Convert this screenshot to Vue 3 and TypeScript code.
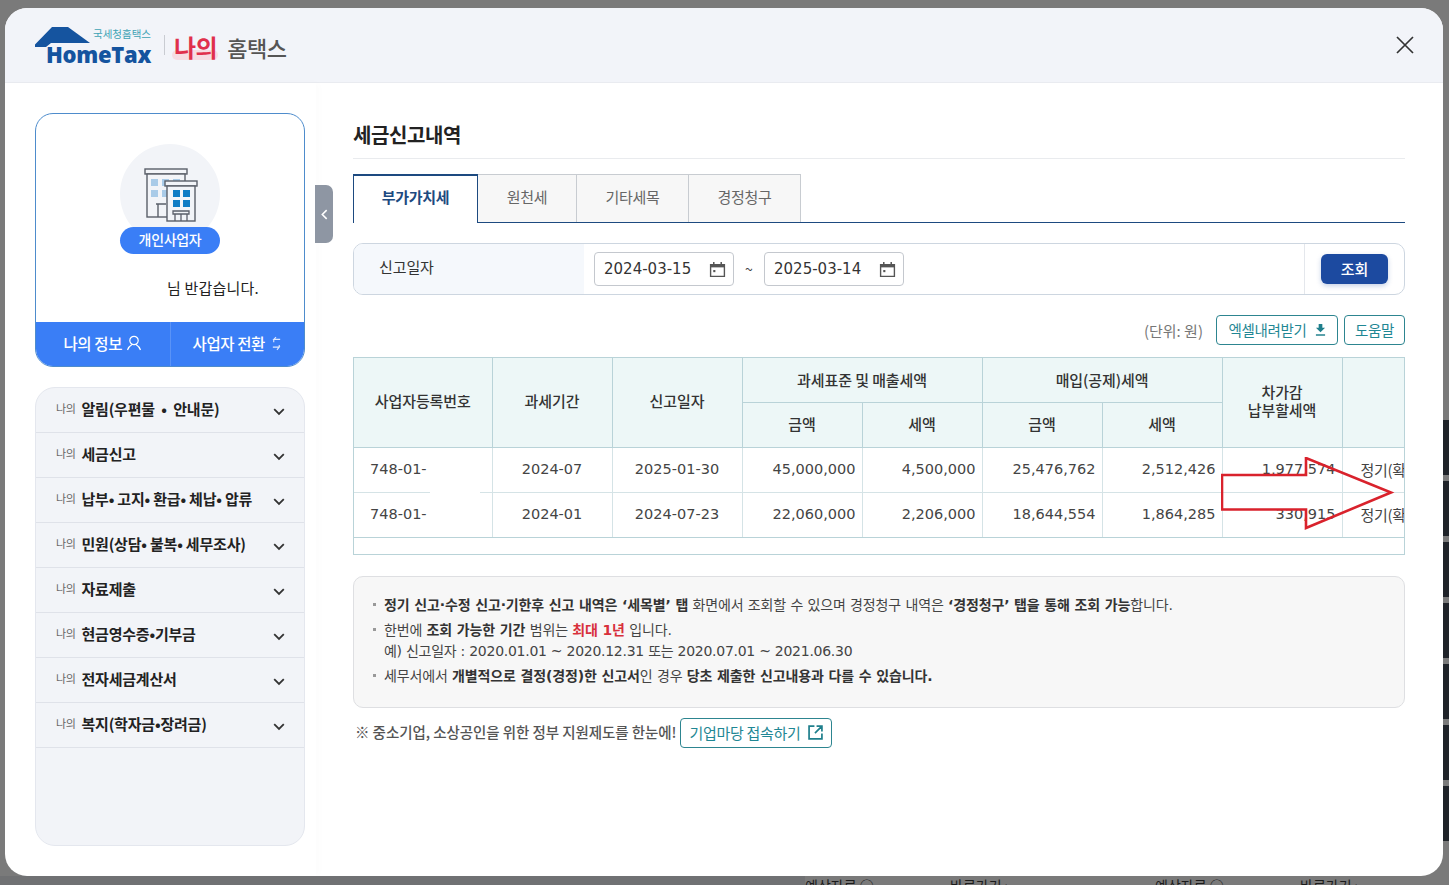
<script setup lang="ts">
const menus = [
  "알림(우편물\u00a0\u00a0•\u00a0\u00a0안내문)",
  "세금신고",
  "납부• 고지• 환급• 체납• 압류",
  "민원(상담• 불복• 세무조사)",
  "자료제출",
  "현금영수증•기부금",
  "전자세금계산서",
  "복지(학자금•장려금)"
];

const tabs = ["부가가치세", "원천세", "기타세목", "경정청구"];

const rows = [
  ["748-01-", "2024-07", "2025-01-30", "45,000,000", "4,500,000", "25,476,762", "2,512,426", "1,977,574", "정기(확정)"],
  ["748-01-", "2024-01", "2024-07-23", "22,060,000", "2,206,000", "18,644,554", "1,864,285", "330,915", "정기(확정)"]
];

const bgStrips = [0, 1, 2, 3, 4, 5, 6];
</script>

<template>
  <div class="page">
    <div class="bg-right">
      <div v-for="s in bgStrips" :key="s" class="bg-strip"></div>
    </div>
    <div class="bg-left-shade"></div>
    <div class="bg-links">
      <span>예상자료 ○</span><span>바로가기 ›</span><span>예상자료 ○</span><span>바로가기 ›</span>
    </div>

    <div class="modal">
      <header class="modal-head">
        <div class="logo">
          <svg class="logo-house" viewBox="0 0 120 44" width="120" height="44" aria-hidden="true">
            <path d="M0 21.5 L17 4 H33 L55 20 H16 L11 24 H0 Z" fill="#15549f" />
          </svg>
          <span class="logo-sub">국세청홈택스</span>
          <span class="logo-main">HomeTax</span>
        </div>
        <span class="logo-sep"></span>
        <span class="my"><span class="my-mark"></span><b>나의</b></span>
        <span class="my-home">홈택스</span>
        <svg class="close" viewBox="0 0 18 18" width="18" height="18" aria-label="닫기">
          <path d="M1 1 L17 17 M17 1 L1 17" stroke="#333" stroke-width="1.7" fill="none" />
        </svg>
      </header>

      <div class="modal-body">
        <aside class="side">
          <div class="profile">
            <div class="avatar">
              <svg viewBox="0 0 56 56" width="56" height="56" aria-hidden="true">
                <rect x="3" y="2" width="42" height="5" fill="#f2f4f8" stroke="#5a5f69" stroke-width="1.4" />
                <rect x="5" y="7" width="38" height="43" fill="#f2f4f8" stroke="#5a5f69" stroke-width="1.4" />
                <g fill="#a9cbe8">
                  <rect x="9" y="12" width="7" height="7" /><rect x="20" y="12" width="7" height="7" /><rect x="31" y="12" width="7" height="7" />
                  <rect x="9" y="23" width="7" height="7" /><rect x="20" y="23" width="7" height="7" />
                </g>
                <path d="M14 37 H24 M16 37 V50 M26 37 V50" stroke="#5a5f69" stroke-width="1.4" fill="none" />
                <rect x="23" y="14" width="32" height="5" fill="#f2f4f8" stroke="#5a5f69" stroke-width="1.4" />
                <rect x="25" y="19" width="28" height="35" fill="#f2f4f8" stroke="#5a5f69" stroke-width="1.4" />
                <g fill="#0f7cc4">
                  <rect x="31" y="23" width="7" height="7" /><rect x="41" y="23" width="7" height="7" />
                  <rect x="31" y="33" width="7" height="7" /><rect x="41" y="33" width="7" height="7" />
                </g>
                <path d="M31 44 H47 V47 H31 Z M33 47 V54 M39 47 V54 M45 47 V54" stroke="#5a5f69" stroke-width="1.3" fill="none" />
              </svg>
              <span class="badge">개인사업자</span>
            </div>
            <p class="hello">님 반갑습니다.</p>
            <div class="profile-actions">
              <span class="pa">
                나의 정보
                <svg viewBox="0 0 16 16" width="16" height="16" aria-hidden="true">
                  <circle cx="8" cy="5.5" r="4.2" fill="none" stroke="#fff" stroke-width="1.2" />
                  <path d="M1.5 15 C2.5 11.5 5 10 6 9.4 M14.5 15 C13.5 11.5 11 10 10 9.4" fill="none" stroke="#fff" stroke-width="1.2" />
                </svg>
              </span>
              <span class="pa pa-r">
                사업자 전환
                <svg viewBox="0 0 12 16" width="11" height="15" aria-hidden="true">
                  <path d="M10 3.5 H3 L5.5 1 M3 6.5 L3 3.5 M2 12 H9 L6.5 15 M9 9.5 V12" fill="none" stroke="#dfe9ff" stroke-width="1.2" />
                </svg>
              </span>
            </div>
          </div>

          <nav class="menu">
            <div v-for="m in menus" :key="m" class="menu-item">
              <span class="menu-pre">나의</span>
              <span class="menu-name">{{ m }}</span>
              <svg class="chev" viewBox="0 0 12 8" width="12" height="8" aria-hidden="true">
                <path d="M1.2 1.2 L6 6 L10.8 1.2" fill="none" stroke="#333" stroke-width="1.8" />
              </svg>
            </div>
          </nav>
        </aside>

        <div class="handle">
          <svg viewBox="0 0 8 12" width="7" height="11" aria-hidden="true">
            <path d="M6.5 1 L1.5 6 L6.5 11" fill="none" stroke="#fff" stroke-width="1.8" />
          </svg>
        </div>

        <main class="main">
          <h2 class="title">세금신고내역</h2>

          <div class="tabs">
            <span v-for="(t, i) in tabs" :key="t" class="tab" :class="{ on: i === 0 }">{{ t }}</span>
          </div>

          <div class="search">
            <div class="search-label">신고일자</div>
            <div class="search-fields">
              <div class="date">
                2024-03-15
                <svg viewBox="0 0 16 16" width="17" height="17" aria-hidden="true">
                  <path d="M1.5 3.5 H14.5 V14.5 H1.5 Z" fill="none" stroke="#555" stroke-width="1.3" />
                  <path d="M1.5 3 H14.5 V6 H1.5 Z" fill="#555" />
                  <path d="M4.5 1 V3 M11.5 1 V3" stroke="#555" stroke-width="1.4" />
                  <rect x="4" y="8.5" width="2" height="2" fill="#555" />
                </svg>
              </div>
              <span class="tilde">~</span>
              <div class="date">
                2025-03-14
                <svg viewBox="0 0 16 16" width="17" height="17" aria-hidden="true">
                  <path d="M1.5 3.5 H14.5 V14.5 H1.5 Z" fill="none" stroke="#555" stroke-width="1.3" />
                  <path d="M1.5 3 H14.5 V6 H1.5 Z" fill="#555" />
                  <path d="M4.5 1 V3 M11.5 1 V3" stroke="#555" stroke-width="1.4" />
                  <rect x="4" y="8.5" width="2" height="2" fill="#555" />
                </svg>
              </div>
            </div>
            <div class="search-btn-cell"><button class="btn-search">조회</button></div>
          </div>

          <div class="tools">
            <span class="unit">(단위: 원)</span>
            <span class="btn-line excel">
              엑셀내려받기
              <svg viewBox="0 0 12 14" width="11" height="13" aria-hidden="true">
                <path d="M4 1 H8 V5 H11 L6 10 L1 5 H4 Z" fill="#1f7f8c" />
                <path d="M1 13 H11" stroke="#1f7f8c" stroke-width="1.6" />
              </svg>
            </span>
            <span class="btn-line help">도움말</span>
          </div>

          <div class="table-wrap">
            <table class="grid">
              <colgroup>
                <col style="width: 138px" /><col style="width: 120px" /><col style="width: 130px" />
                <col style="width: 120px" /><col style="width: 120px" /><col style="width: 120px" />
                <col style="width: 120px" /><col style="width: 120px" /><col style="width: 120px" />
              </colgroup>
              <thead>
                <tr>
                  <th rowspan="2" class="pull">사업자등록번호</th>
                  <th rowspan="2" class="pull">과세기간</th>
                  <th rowspan="2" class="pull">신고일자</th>
                  <th colspan="2" class="top">과세표준 및 매출세액</th>
                  <th colspan="2" class="top">매입(공제)세액</th>
                  <th rowspan="2" class="pull">차가감<br />납부할세액</th>
                  <th rowspan="2"></th>
                </tr>
                <tr>
                  <th class="pull">금액</th><th class="pull">세액</th><th class="pull">금액</th><th class="pull">세액</th>
                </tr>
              </thead>
              <tbody>
                <tr v-for="(r, ri) in rows" :key="ri">
                  <td class="num-l">{{ r[0] }}</td>
                  <td class="mid">{{ r[1] }}</td>
                  <td class="mid">{{ r[2] }}</td>
                  <td class="num">{{ r[3] }}</td>
                  <td class="num">{{ r[4] }}</td>
                  <td class="num">{{ r[5] }}</td>
                  <td class="num">{{ r[6] }}</td>
                  <td class="num">{{ r[7] }}</td>
                  <td class="kind">{{ r[8] }}</td>
                </tr>
              </tbody>
            </table>
            <div class="table-foot"></div>
            <div class="mask"></div>
            <svg class="arrow" viewBox="0 0 180 76" width="180" height="76" aria-hidden="true">
              <path d="M1 18 H85 V1 L170 35.5 L85 71 V52.5 H1 Z" fill="none" stroke="#d9222c" stroke-width="2.6" />
            </svg>
          </div>

          <div class="notice">
            <p class="li"><b>정기 신고·수정 신고·기한후 신고 내역은 ‘세목별’ 탭</b> 화면에서 조회할 수 있으며 경정청구 내역은 <b>‘경정청구’ 탭을 통해 조회 가능</b>합니다.</p>
            <p class="li">한번에 <b>조회 가능한 기간</b> 범위는 <b class="red">최대 1년</b> 입니다.</p>
            <p class="sub">예) 신고일자 : 2020.01.01 ~ 2020.12.31 또는 2020.07.01 ~ 2021.06.30</p>
            <p class="li">세무서에서 <b>개별적으로 결정(경정)한 신고서</b>인 경우 <b>당초 제출한 신고내용과 다를 수 있습니다.</b></p>
          </div>

          <div class="support">
            <span class="support-text">※ 중소기업, 소상공인을 위한 정부 지원제도를 한눈에!</span>
            <span class="btn-line go">
              기업마당 접속하기
              <svg viewBox="0 0 14 14" width="15" height="15" aria-hidden="true">
                <path d="M6 1 H1 V13 H13 V8 M8 1 H13 V6 M13 1 L6.5 7.5" fill="none" stroke="#1f7f8c" stroke-width="1.6" />
              </svg>
            </span>
          </div>
        </main>
      </div>
    </div>
  </div>
</template>

<style scoped>
.page {
  position: relative;
  width: 1449px;
  height: 885px;
  overflow: hidden;
  background: #7a7a7a;
  padding: 8px 6px 9px 5px;
  box-sizing: border-box;
  font-family: "Noto Sans CJK KR", "Noto Sans", sans-serif;
  color: #333;
}

.bg-left-shade {
  position: absolute;
  left: 0;
  top: 876px;
  width: 805px;
  height: 9px;
  background: #707173;
}

.bg-links {
  position: absolute;
  left: 805px;
  top: 876px;
  display: flex;
  font-size: 14px;
  line-height: 18px;
  color: #1c1c1c;
  white-space: nowrap;
}

.bg-links span {
  width: 145px;
}

.bg-links span:nth-child(2) {
  width: 205px;
}

.bg-right {
  position: absolute;
  right: 0;
  top: 420px;
  width: 6px;
  display: flex;
  flex-direction: column;
  gap: 6px;
}

.bg-strip {
  height: 55px;
  background: #1f2329;
}

.modal {
  position: relative;
  height: 868px;
  background: #fff;
  border-radius: 22px;
  overflow: hidden;
}

.modal-head {
  position: relative;
  display: flex;
  align-items: center;
  height: 75px;
  padding-left: 30px;
  background: #f2f4f9;
  border-bottom: 1px solid #e9ebf0;
  box-sizing: border-box;
}

.logo {
  position: relative;
  width: 118px;
  height: 44px;
  flex: none;
}

.logo-house {
  position: absolute;
  left: 0;
  top: 0;
}

.logo-sub {
  position: absolute;
  left: 58px;
  top: 4px;
  font-size: 10.5px;
  line-height: 14px;
  color: #3fa3b5;
  white-space: nowrap;
}

.logo-main {
  position: absolute;
  left: 11px;
  top: 16px;
  font-family: "Open Sans", sans-serif;
  font-weight: 800;
  font-size: 22px;
  line-height: 30px;
  letter-spacing: -0.3px;
  color: #15549f;
  white-space: nowrap;
}

.logo-sep {
  width: 1px;
  height: 20px;
  margin: 0 9px 0 11px;
  background: #c9ccd2;
}

.my {
  position: relative;
  margin-top: 4px;
  font-size: 24px;
  line-height: 30px;
  color: #e0304c;
  letter-spacing: -0.5px;
}

.my b {
  position: relative;
  font-weight: 700;
}

.my-mark {
  position: absolute;
  left: -2px;
  right: -1px;
  bottom: 2px;
  height: 10px;
  border-radius: 5px;
  background: #f6dde3;
}

.my-home {
  margin: 4px 0 0 10px;
  font-size: 22px;
  font-weight: 500;
  color: #555;
  letter-spacing: -0.4px;
}

.close {
  position: absolute;
  right: 29px;
  top: 28px;
}

.modal-body {
  position: relative;
  display: flex;
  height: 793px;
}

.side {
  flex: none;
  width: 311px;
  padding: 30px 11px 0 30px;
  box-sizing: border-box;
  box-shadow: 3px 0 8px rgba(0, 0, 0, 0.015);
}

.profile {
  height: 254px;
  border: 1px solid #4e8ccc;
  border-radius: 18px;
  overflow: hidden;
  box-sizing: border-box;
  display: flex;
  flex-direction: column;
  align-items: center;
}

.avatar {
  position: relative;
  margin-top: 30px;
  width: 100px;
  height: 100px;
  border-radius: 50%;
  background: #f2f4f8;
  display: flex;
  justify-content: center;
  padding-top: 23px;
  box-sizing: border-box;
}

.badge {
  position: absolute;
  left: 0;
  right: 0;
  top: 83px;
  height: 27px;
  border-radius: 14px;
  background: #3a7ef6;
  color: #fff;
  font-size: 14px;
  font-weight: 500;
  line-height: 24px;
  text-align: center;
  letter-spacing: -0.3px;
}

.hello {
  margin: 33px 0 0;
  padding-left: 131px;
  width: 100%;
  box-sizing: border-box;
  font-size: 15px;
  line-height: 22px;
  color: #222;
  letter-spacing: 0.2px;
}

.profile-actions {
  margin-top: auto;
  width: 100%;
  height: 44px;
  display: flex;
  background: #3a7ef6;
}

.pa {
  flex: 1;
  display: flex;
  align-items: center;
  justify-content: center;
  gap: 4px;
  padding-bottom: 2px;
  color: #fff;
  font-size: 15.5px;
  font-weight: 500;
  letter-spacing: -0.4px;
}

.pa-r {
  border-left: 1px solid #5a93f7;
  gap: 6px;
}

.menu {
  margin-top: 20px;
  height: 459px;
  background: #f2f4f8;
  border: 1px solid #e4e7ee;
  border-radius: 20px;
  box-sizing: border-box;
  overflow: hidden;
}

.menu-item {
  position: relative;
  display: flex;
  align-items: center;
  height: 45px;
  padding-left: 20px;
  border-bottom: 1px solid #dfe2e9;
  box-sizing: border-box;
  padding-bottom: 4px;
}

.menu-pre {
  font-size: 11px;
  color: #666;
  margin-right: 6px;
  letter-spacing: -0.4px;
}

.menu-name {
  font-size: 15px;
  font-weight: 700;
  color: #222;
  letter-spacing: -0.2px;
  white-space: nowrap;
}

.chev {
  position: absolute;
  right: 19px;
  top: 20px;
}

.handle {
  position: absolute;
  left: 310px;
  top: 102px;
  width: 18px;
  height: 58px;
  border-radius: 0 7px 7px 0;
  background: #8e96a3;
  display: flex;
  align-items: center;
  justify-content: center;
}

.main {
  flex: none;
  width: 1052px;
  margin-left: 37px;
}

.title {
  margin: 0;
  height: 76px;
  padding-top: 36px;
  box-sizing: border-box;
  border-bottom: 1px solid #e9ebee;
  font-size: 20px;
  font-weight: 700;
  line-height: 32px;
  color: #222;
  letter-spacing: -0.4px;
}

.tabs {
  margin-top: 15px;
  display: flex;
  height: 49px;
  border-bottom: 1px solid #1d4a80;
  box-sizing: border-box;
}

.tab {
  width: 112px;
  border: 1px solid #c8ccd1;
  border-left: 0;
  border-bottom: 0;
  background: #f7f7f7;
  color: #666;
  font-size: 15px;
  line-height: 44px;
  text-align: center;
  box-sizing: border-box;
  letter-spacing: -0.3px;
}

.tab:nth-child(2) {
  width: 99px;
}

.tab.on {
  width: 125px;
  height: 49px;
  background: #fff;
  border: 1px solid #1d4a80;
  border-top-width: 2px;
  border-bottom: 0;
  color: #1d4a80;
  font-weight: 700;
  line-height: 42px;
}

.search {
  margin-top: 20px;
  height: 52px;
  display: flex;
  border: 1px solid #cdd6e0;
  border-radius: 10px;
  overflow: hidden;
  box-sizing: border-box;
}

.search-label {
  width: 230px;
  padding-left: 25px;
  background: #f5f8fc;
  font-size: 15px;
  line-height: 46px;
  box-sizing: border-box;
  color: #333;
  letter-spacing: -0.1px;
}

.search-fields {
  flex: 1;
  display: flex;
  align-items: center;
  padding-left: 10px;
}

.date {
  width: 140px;
  height: 34px;
  border: 1px solid #c4c8ce;
  border-radius: 4px;
  box-sizing: border-box;
  padding: 0 7px 0 9px;
  display: flex;
  align-items: center;
  justify-content: space-between;
  font-family: "DejaVu Sans", sans-serif;
  font-size: 15px;
  color: #333;
}

.tilde {
  width: 30px;
  text-align: center;
  font-size: 14px;
  color: #444;
}

.search-btn-cell {
  width: 100px;
  border-left: 1px solid #e4e7ec;
  display: flex;
  align-items: center;
  justify-content: center;
  box-sizing: border-box;
}

.btn-search {
  width: 67px;
  height: 30px;
  padding: 0 0 2px;
  border: 0;
  border-radius: 6px;
  background: #1c4aa0;
  box-shadow: 0 2px 5px rgba(28, 74, 160, 0.25);
  color: #fff;
  font-family: inherit;
  font-size: 15px;
  font-weight: 500;
}

.tools {
  margin-top: 20px;
  height: 30px;
  display: flex;
  justify-content: flex-end;
  align-items: center;
  gap: 6px;
}

.unit {
  margin-right: 7px;
  font-size: 15px;
  color: #777;
}

.btn-line {
  display: inline-flex;
  align-items: center;
  justify-content: center;
  height: 30px;
  padding-bottom: 2px;
  box-sizing: border-box;
  border: 1px solid #2d8590;
  border-radius: 4px;
  background: #fff;
  color: #1f8794;
  font-size: 14.5px;
  letter-spacing: -0.3px;
}

.excel {
  width: 122px;
  gap: 8px;
}

.help {
  width: 61px;
}

.table-wrap {
  position: relative;
  margin-top: 12px;
  height: 198px;
  overflow: hidden;
  border: 1px solid #b9d3d8;
  box-sizing: border-box;
}

.grid {
  table-layout: fixed;
  width: 1108px;
  border-collapse: collapse;
}

.grid th {
  height: 45px;
  padding: 0;
  background: #edf7f7;
  border: 1px solid #b9d3d8;
  border-top: 0;
  box-sizing: border-box;
  font-size: 15px;
  font-weight: 500;
  line-height: 18px;
  color: #333;
  letter-spacing: -0.1px;
}

.grid th:first-child {
  border-left: 0;
}

.grid th.top {
  height: 44px;
}

.grid th.pull {
  padding-bottom: 2px;
}

.grid td {
  height: 45px;
  padding: 0 6px 1px;
  border-bottom: 1px solid #d5e3e6;
  border-right: 1px solid #d5e3e6;
  box-sizing: border-box;
  font-family: "DejaVu Sans", sans-serif;
  font-size: 14.5px;
  color: #444;
  white-space: nowrap;
}

.grid tbody tr:last-child td {
  border-bottom: 1px solid #b9d3d8;
}

.num {
  text-align: right;
}

.mid {
  text-align: center;
}

.grid td.num-l {
  padding-left: 16px;
}

.grid td.kind {
  padding-left: 18px;
  font-family: "Noto Sans CJK KR", sans-serif;
  font-size: 15px;
  letter-spacing: -0.3px;
}

.table-foot {
  height: 16px;
}

.mask {
  position: absolute;
  left: 76px;
  top: 116px;
  width: 50px;
  height: 40px;
  background: #fff;
}

.arrow {
  position: absolute;
  left: 867px;
  top: 99px;
}

.notice {
  margin-top: 21px;
  height: 132px;
  padding: 18px 20px 0 30px;
  background: #f7f7f7;
  border: 1px solid #dedfe2;
  border-radius: 10px;
  box-sizing: border-box;
  font-family: "DejaVu Sans", "Noto Sans CJK KR", sans-serif;
  font-size: 14px;
  line-height: 21px;
  color: #444;
  letter-spacing: -0.13px;
}

.notice p {
  margin: 0;
}

.notice b {
  color: #333;
  font-weight: 700;
}

.notice b.red {
  color: #d8303c;
}

.notice .sub {
  letter-spacing: -0.27px;
}

.li {
  position: relative;
}

.li::before {
  content: "";
  position: absolute;
  left: -11px;
  top: 8px;
  width: 3px;
  height: 3px;
  background: #999;
}

.li + .li {
  margin-top: 4px;
}

.sub + .li {
  margin-top: 4px;
}

.support {
  margin-top: 10px;
  display: flex;
  align-items: center;
  gap: 4px;
}

.support-text {
  margin-left: 2px;
  font-size: 14.5px;
  font-weight: 500;
  color: #555;
  letter-spacing: -0.07px;
  padding-bottom: 4px;
}

.go {
  width: 152px;
  gap: 8px;
  font-size: 15px;
}
</style>

<style>
html,
body {
  margin: 0;
  background: #7a7a7a;
}
</style>
